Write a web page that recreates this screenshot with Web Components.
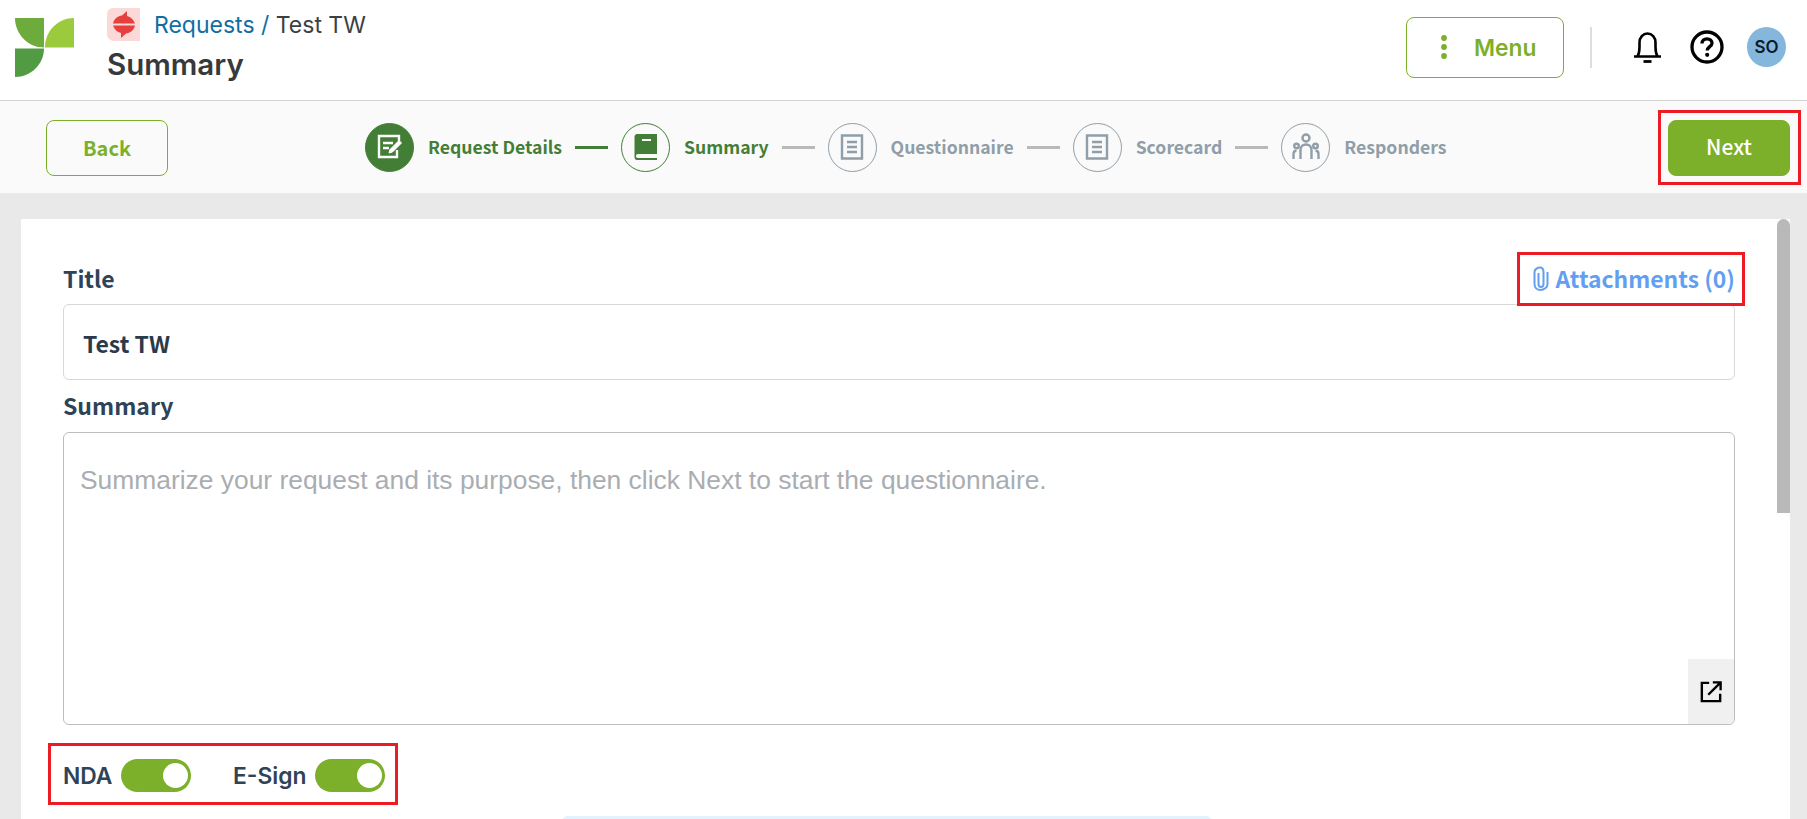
<!DOCTYPE html>
<html>
<head>
<meta charset="utf-8">
<style>
  html, body { margin: 0; height: 819px; overflow: hidden; background: #e9e9e9; }
  body { font-family: "Noto Sans CJK SC", "Noto Sans", sans-serif; position: relative; }
</style>
</head>
<body>
<app-header></app-header>
<step-bar></step-bar>
<form-card></form-card>

<script>
const GREEN = '#7db02a';
const DARK_GREEN = '#437e36';
const SOURCE = '"Noto Sans CJK SC", "Noto Sans", sans-serif';

class OutlineButton extends HTMLElement {
  constructor() {
    super();
    this.attachShadow({ mode: 'open' }).innerHTML = `
      <style>
        :host { display: flex; align-items: center; justify-content: center; box-sizing: border-box;
          width: 122px; height: 56px; border-radius: 8px; border: 1px solid ${GREEN}; color: ${GREEN};
          font: 600 20px/1 ${SOURCE}; }
        :host([solid]) { background: ${GREEN}; color: #fff; font-weight: 500; font-size: 21px; padding-bottom: 3px; }
      </style>
      <slot></slot>`;
  }
}
customElements.define('outline-button', OutlineButton);

class AppHeader extends HTMLElement {
  constructor() {
    super();
    this.attachShadow({ mode: 'open' }).innerHTML = `
      <style>
        :host { display: flex; box-sizing: border-box; height: 101px; background: #fff; border-bottom: 1px solid #d2d2d2; }
        .logo { margin: 18px 0 0 15px; width: 59px; height: 59px; flex: none; }
        .titles { margin-left: 33px; padding-top: 8px; font-family: Inter, sans-serif; }
        .crumbs { display: flex; align-items: center; height: 33px; font-size: 23px; color: #3d3f42; }
        .crumbs svg { margin-right: 14px; }
        .crumbs b { font-weight: 400; color: #0f6fa3; white-space: pre; }
        h1 { margin: 5px 0 0; font-size: 29.5px; line-height: 36px; font-weight: 600; color: #37393c; }
        .right { margin-left: auto; display: flex; align-items: center; padding-right: 21px; }
        .menu { box-sizing: border-box; width: 158px; height: 61px; margin-top: -6px; border: 1px solid ${GREEN}; border-radius: 8px;
          display: flex; align-items: center; color: ${GREEN}; font: 600 22.8px Inter, sans-serif; }
        .menu svg { margin: 0 26px 0 33px; }
        .sep { width: 2px; height: 41px; margin: -6px 0 0 26px; background: #dedede; }
        .bell { margin: -6px 0 0 41px; }
        .help { margin: -6px 0 0 28px; }
        .avatar { width: 39px; height: 40px; margin: -6px 0 0 23px; border-radius: 50%; background: #85b7dd; color: #0e1a24;
          display: flex; align-items: center; justify-content: center; font: 600 17px Inter, sans-serif; }
      </style>
      <svg class="logo" viewBox="0 0 59 59">
        <path d="M0 0H29V29.500C13 29.500 0 16 0 0Z" fill="#6cab3c"/>
        <path d="M59 0V29.500H30V29C30 13 43 0 59 0Z" fill="#9bcb3c"/>
        <path d="M0 30.500H29C29 46 16 59 0 59Z" fill="#519c43"/>
      </svg>
      <div class="titles">
        <div class="crumbs">
          <svg width="33" height="33" viewBox="0 0 33 33">
            <path d="M6 0H33V33H7A7 7 0 0 1 0 26V6A6 6 0 0 1 6 0Z" fill="#fbd9d9"/>
            <path d="M6 15.500C7 10.500 11 8 15 7.500L20 3V8C24 9 26.500 11.500 28 15.500Z" fill="#e5403d"/>
            <path d="M28 17.500C27 22.500 23 25 19 25.500L14 30V25C10 24 7.500 21.500 6 17.500Z" fill="#e5403d"/>
          </svg>
          <b>Requests / </b>Test TW
        </div>
        <h1>Summary</h1>
      </div>
      <div class="right">
        <div class="menu">
          <svg width="8" height="26" viewBox="0 0 8 26" fill="${GREEN}"><circle cx="4" cy="4" r="2.900"/><circle cx="4" cy="13" r="2.900"/><circle cx="4" cy="22" r="2.900"/></svg>
          Menu
        </div>
        <div class="sep"></div>
        <svg class="bell" width="29" height="31" viewBox="0 0 29 31" fill="none" stroke="#000" stroke-width="2.600">
          <path d="M1 24.500H28M4.500 24.500C6 22 6.500 20 6.500 15V10.500C6.500 5.500 10 1.500 14.500 1.500S22.500 5.500 22.500 10.500V15C22.500 20 23 22 24.500 24.500"/>
          <path d="M10.500 29.500H18.500" stroke-width="2.800"/>
        </svg>
        <svg class="help" width="34" height="34" viewBox="0 0 34 34">
          <circle cx="17" cy="17" r="15" fill="none" stroke="#000" stroke-width="3.300"/>
          <path d="M12 13.500C12 10.500 14.200 8.800 17 8.800S22 10.500 22 13.200C22 16.500 17.200 16.800 17.200 20.500" fill="none" stroke="#000" stroke-width="3.300"/>
          <circle cx="17.200" cy="24.800" r="2.100" fill="#000"/>
        </svg>
        <div class="avatar">SO</div>
      </div>`;
  }
}
customElements.define('app-header', AppHeader);

const STEP_ICONS = {
  edit: `<svg width="26" height="26" viewBox="0 0 26 26" fill="none" stroke="#fff" stroke-width="2.400">
      <path d="M22 7V2H2V23H20V16"/><path d="M6 9H16M6 14H12" /><path d="M12 19L13 15.500L22 6.500L24.500 9L15.500 18Z" fill="#fff" stroke-width="1"/>
    </svg>`,
  book: `<svg width="24" height="26" viewBox="0 0 24 26">
      <path d="M3 0H23V20H4C2.500 20 2 21 2 22S2.500 24 4 24H23V26H3C1.500 26 .5 25 .5 23V3C.5 1.500 1.500 0 3 0Z" fill="${DARK_GREEN}"/>
      <path d="M8 5H17V7H8Z" fill="#fff"/>
    </svg>`,
  doc: `<svg width="24" height="26" viewBox="0 0 24 26" fill="none" stroke="#8f9ea8" stroke-width="2.400">
      <path d="M2 1.500H22V24.500H2Z"/><path d="M7 8H17M7 13H17M7 18H17"/>
    </svg>`,
  people: `<svg width="28" height="28" viewBox="0 0 28 28" fill="none" stroke="#8f9ea8" stroke-width="2.400">
      <circle cx="14" cy="5" r="3.500"/><circle cx="4.500" cy="13" r="2.300"/><circle cx="23.500" cy="13" r="2.300"/>
      <path d="M8.500 26V17C8.500 13.500 11 11.500 14 11.500S19.500 13.500 19.500 17V26"/>
      <path d="M1.500 26V21C1.500 19 2.800 17.800 4.500 17.800M26.500 26V21C26.500 19 25.200 17.800 23.500 17.800"/>
    </svg>`
};

class StepItem extends HTMLElement {
  constructor() {
    super();
    this.attachShadow({ mode: 'open' });
  }
  connectedCallback() {
    const state = this.getAttribute('state') || 'todo';
    const color = state === 'todo' ? '#8f9ea8' : DARK_GREEN;
    this.shadowRoot.innerHTML = `
      <style>
        :host { display: flex; align-items: center; color: ${color}; font: 600 17.6px/1 ${SOURCE}; white-space: nowrap; }
        .dot { box-sizing: border-box; width: 49px; height: 49px; border-radius: 50%; margin-right: 14px;
          border: 1px solid ${color}; display: flex; align-items: center; justify-content: center;
          background: ${state === 'done' ? DARK_GREEN : 'transparent'}; }
      </style>
      <div class="dot">${STEP_ICONS[this.getAttribute('icon')]}</div>
      <slot></slot>`;
  }
}
customElements.define('step-item', StepItem);

class StepBar extends HTMLElement {
  constructor() {
    super();
    this.attachShadow({ mode: 'open' }).innerHTML = `
      <style>
        :host { display: flex; align-items: center; box-sizing: border-box; height: 92px; padding: 2px 17px 0 46px; background: #fafafa; }
        .steps { display: flex; align-items: center; margin: -2px 0 0 197px; }
        .line { width: 33px; height: 3px; margin: 0 13px; background: #b9b9b9; }
        .line.on { background: ${DARK_GREEN}; }
        outline-button[solid] { margin-left: auto; }
      </style>
      <outline-button>Back</outline-button>
      <div class="steps">
        <step-item state="done" icon="edit">Request Details</step-item>
        <div class="line on"></div>
        <step-item state="current" icon="book">Summary</step-item>
        <div class="line"></div>
        <step-item icon="doc">Questionnaire</step-item>
        <div class="line"></div>
        <step-item icon="doc">Scorecard</step-item>
        <div class="line"></div>
        <step-item icon="people">Responders</step-item>
      </div>
      <outline-button solid>Next</outline-button>
      <mark-box style="left:1658px;top:110px;width:143px;height:75px"></mark-box>`;
  }
}
customElements.define('step-bar', StepBar);

// red review rectangles laid over the page
class MarkBox extends HTMLElement {
  constructor() {
    super();
    this.attachShadow({ mode: 'open' }).innerHTML = `
      <style>:host { position: absolute; box-sizing: border-box; border: 3px solid #ed1c24; pointer-events: none; }</style>`;
  }
}
customElements.define('mark-box', MarkBox);

class ToggleSwitch extends HTMLElement {
  constructor() {
    super();
    this.attachShadow({ mode: 'open' }).innerHTML = `
      <style>
        :host { display: flex; align-items: center; gap: 9px; color: #2f4358; font: 600 22.8px Inter, sans-serif; }
        .track { box-sizing: border-box; width: 69.5px; height: 33px; border-radius: 17px; background: ${GREEN};
          display: flex; justify-content: flex-end; align-items: center; padding-right: 3px; }
        .knob { width: 25px; height: 25px; border-radius: 50%; background: #fff; }
      </style>
      <slot></slot>
      <div class="track"><div class="knob"></div></div>`;
  }
}
customElements.define('toggle-switch', ToggleSwitch);

class FormCard extends HTMLElement {
  constructor() {
    super();
    this.attachShadow({ mode: 'open' }).innerHTML = `
      <style>
        :host { display: block; position: relative; box-sizing: border-box; height: 600px; margin: 26px 17px 0 21px;
          padding: 45px 55px 0 42px; background: #fff; }
        .label-row { display: flex; justify-content: space-between; align-items: center; color: #2f4358;
          font: 600 23px/30px ${SOURCE}; }
        .first { height: 30px; margin-bottom: 10px; margin-top: -1px; padding-bottom: 1px; }
        .second { height: 30px; margin: 10px 0 12px; }
        .attach { display: flex; align-items: center; gap: 7px; color: #639ff0; font: 600 22.9px/30px ${SOURCE}; }
        .input { box-sizing: border-box; height: 76px; padding: 2px 0 0 19px; border: 1px solid #d8d8d8; border-radius: 6px;
          display: flex; align-items: center; color: #2b3a4a; font: 600 23px/1 ${SOURCE}; }
        .area { position: relative; box-sizing: border-box; height: 293px; padding: 32px 0 0 16px; border: 1px solid #bdbdbd; border-radius: 6px;
          color: #a9adb2; font: 26.4px/30px "Liberation Sans", Arial, sans-serif; }
        .expand { position: absolute; right: 0; bottom: 0; width: 46px; height: 65px; background: #f0f0f0; border-bottom-right-radius: 6px;
          display: flex; align-items: center; justify-content: center; }
        .toggles { display: flex; align-items: center; gap: 42px; height: 33px; margin-top: 34px; }
        .notice { width: 650px; height: 20px; margin: 24px 0 0 499px; background: #e3f2fd; border-radius: 6px 6px 0 0; }
        .thumb { position: absolute; top: 0; right: 0; width: 13px; height: 294px; background: #b9b9b9; border-radius: 7px 7px 0 0; }
      </style>
      <div class="label-row first">
        <span>Title</span>
        <span class="attach">
          <svg width="16" height="25" viewBox="0 0 16 25" fill="none" stroke="#639ff0" stroke-width="2">
            <path d="M5.500 7V18C5.500 20 6.500 21 8 21S10.500 20 10.500 18V6C10.500 3 9 1.500 7 1.500S1.500 3 1.500 6V18C1.500 21.500 4 24 7.500 24S14.500 21.500 14.500 18V6"/>
          </svg>
          Attachments (0)
        </span>
      </div>
      <div class="input">Test TW</div>
      <div class="label-row second"><span>Summary</span></div>
      <div class="area">
        Summarize your request and its purpose, then click Next to start the questionnaire.
        <div class="expand">
          <svg width="22" height="22" viewBox="0 0 24 24" fill="none" stroke="#000" stroke-width="2.600">
            <path d="M10 2H2V22H22V14M14 1.500H22.500V10M22 2L9 15"/>
          </svg>
        </div>
      </div>
      <div class="toggles">
        <toggle-switch>NDA</toggle-switch>
        <toggle-switch>E-Sign</toggle-switch>
      </div>
      <div class="notice"></div>
      <div class="thumb"></div>
      <mark-box style="left:1496px;top:33px;width:228px;height:54px"></mark-box>
      <mark-box style="left:27px;top:524px;width:350px;height:62px"></mark-box>`;
  }
}
customElements.define('form-card', FormCard);
</script>
</body>
</html>
